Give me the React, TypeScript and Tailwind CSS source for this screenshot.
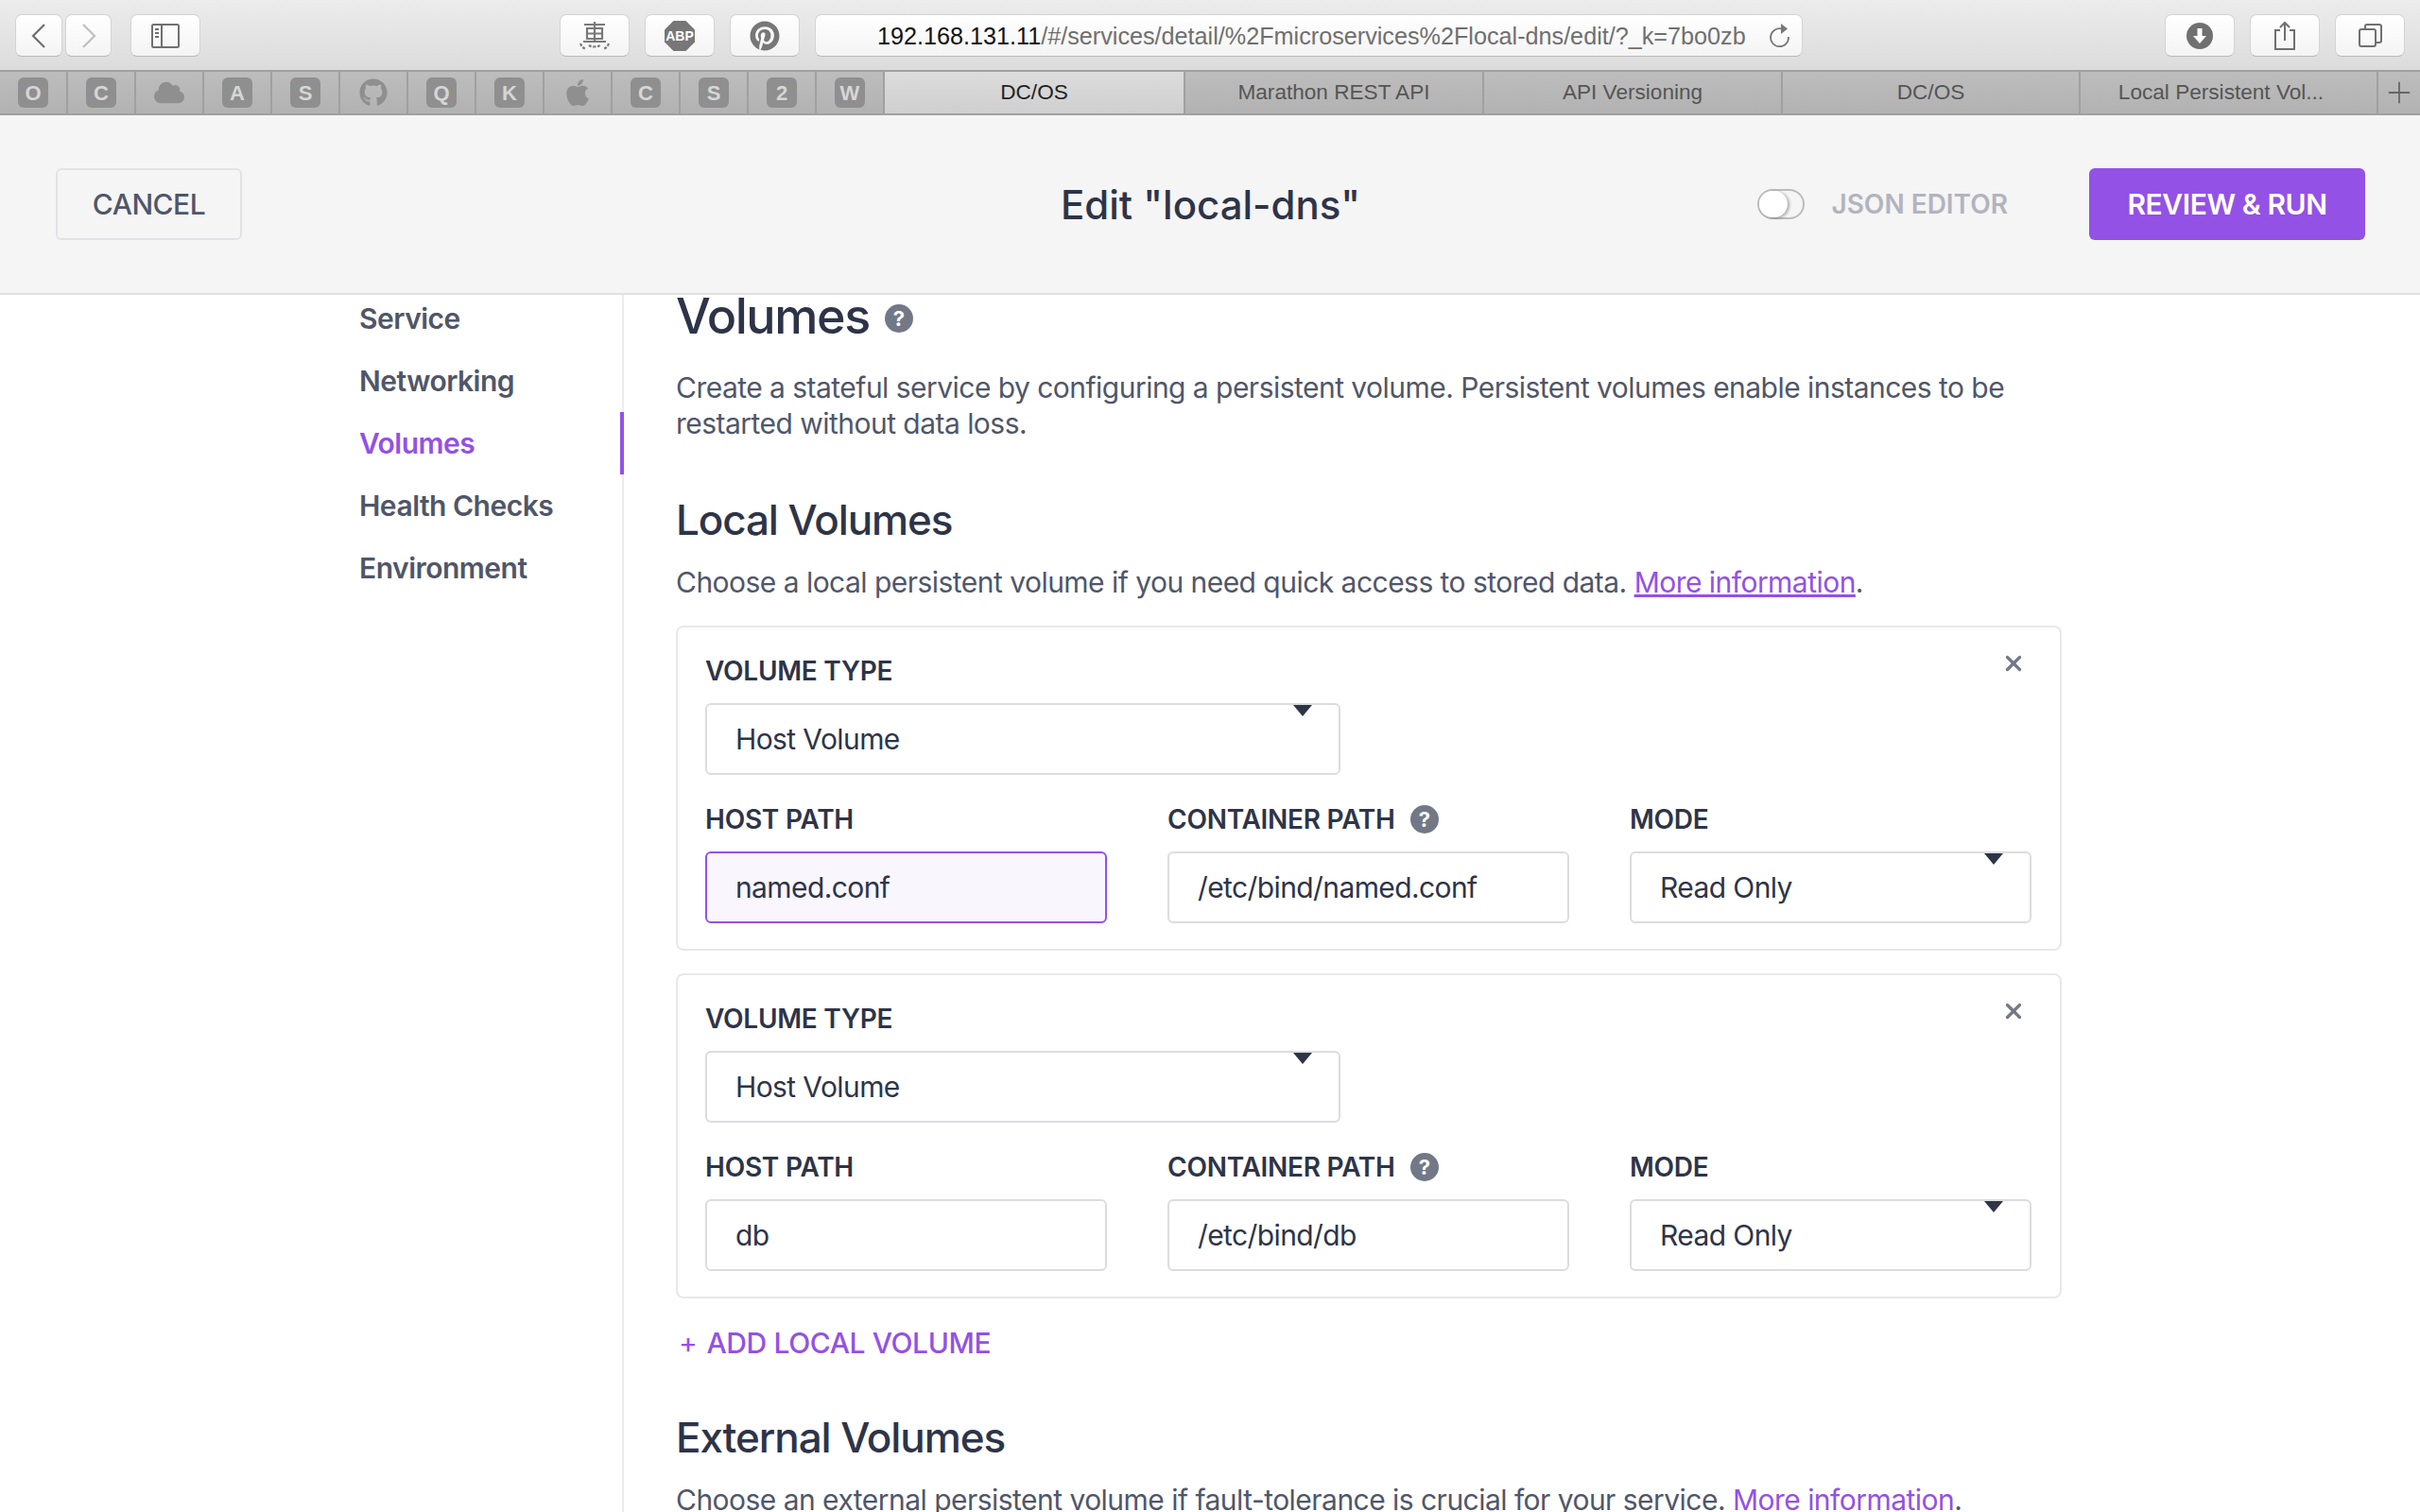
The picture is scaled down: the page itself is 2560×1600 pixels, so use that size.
import { ReactNode } from 'react';
import { Plus, X } from 'lucide-react';
import { FaGithub, FaApple, FaCloud, FaPinterest } from 'react-icons/fa';

const FONT = "font-['Inter','Liberation_Sans',sans-serif]";

function ToolButton({ className, children }: { className: string; children: ReactNode }) {
  return (
    <div className={`flex h-[45px] items-center justify-center rounded-[7px] border border-[#d4d4d4] border-b-[#b9b9b9] bg-gradient-to-b from-white to-[#f4f4f4] ${className}`}>
      {children}
    </div>
  );
}

function Favicon({ label }: { label: string }) {
  return (
    <div className="flex h-full w-[72px] shrink-0 items-center justify-center border-r-2 border-[#a0a0a0]">
      <div className="flex h-[32px] w-[32px] items-center justify-center rounded-[6px] bg-[#8f8f8f] font-['Liberation_Sans'] text-[22px] font-bold text-[#d6d6d6]">
        {label}
      </div>
    </div>
  );
}

function GlyphFavicon({ children }: { children: ReactNode }) {
  return (
    <div className="flex h-full w-[72px] shrink-0 items-center justify-center border-r-2 border-[#a0a0a0] text-[#8f8f8f]">
      {children}
    </div>
  );
}

function Tab({ title, active, className = '' }: { title: string; active?: boolean; className?: string }) {
  return (
    <div className={`flex h-full shrink-0 items-center justify-center border-r-2 border-[#a0a0a0] font-['Liberation_Sans'] text-[22.6px] ${active ? 'bg-gradient-to-b from-[#dcdcdc] to-[#cfcfcf] text-[#232323]' : 'text-[#555555]'} ${className}`}>
      {title}
    </div>
  );
}

function HelpIcon({ size }: { size: string }) {
  return (
    <span className={`inline-flex items-center justify-center rounded-full bg-[#737887] font-bold text-white ${size}`}>?</span>
  );
}

function Label({ children }: { children: ReactNode }) {
  return <div className="flex h-[38px] items-center gap-[16px] text-[28px] font-semibold tracking-[-0.25px] text-[#2e3448]">{children}</div>;
}

function Field({ value, className = '', caret, focused }: { value: string; className?: string; caret?: boolean; focused?: boolean }) {
  return (
    <div className={`relative flex h-[76px] items-center rounded-[6px] border-2 px-[30px] text-[30px] tracking-[-0.6px] text-[#2e3448] ${focused ? 'border-[#9351e5] bg-[#f9f6fe]' : 'border-[#dcdce0]'} ${className}`}>
      {value}
      {caret && <span className="absolute right-[28px] top-[0px] h-0 w-0 border-x-[10px] border-t-[12px] border-x-transparent border-t-[#2e3448]" />}
    </div>
  );
}

function VolumeCard({ hostPath, containerPath, focused }: { hostPath: string; containerPath: string; focused?: boolean }) {
  return (
    <div className="relative h-[344px] w-[1466px] rounded-[8px] border-2 border-[#e8e8ea] px-[29px] pt-[27px]">
      <X className="absolute right-[36px] top-[25px] text-[#737887]" size={26} strokeWidth={3} />
      <Label>VOLUME TYPE</Label>
      <Field value="Host Volume" caret className="mt-[15px] w-[672px]" />
      <div className="mt-[28px] grid grid-cols-[425px_425px_425px] gap-x-[64px]">
        <div>
          <Label>HOST PATH</Label>
          <Field value={hostPath} focused={focused} className="mt-[15px]" />
        </div>
        <div>
          <Label>
            CONTAINER PATH
            <HelpIcon size="h-[30px] w-[30px] text-[22px]" />
          </Label>
          <Field value={containerPath} className="mt-[15px]" />
        </div>
        <div>
          <Label>MODE</Label>
          <Field value="Read Only" caret className="mt-[15px]" />
        </div>
      </div>
    </div>
  );
}

const NAV = ['Service', 'Networking', 'Volumes', 'Health Checks', 'Environment'];

export default function App() {
  return (
    <div className={`flex h-[1600px] w-[2560px] flex-col overflow-hidden bg-white ${FONT}`}>
      {/* Safari toolbar */}
      <div className="flex h-[74px] shrink-0 items-start bg-gradient-to-b from-[#ececec] to-[#dcdcdc] pt-[15px]">
        <ToolButton className="ml-[16px] w-[50px]">
          <svg width="16" height="26" viewBox="0 0 16 26" fill="none" stroke="#6e6e6e" strokeWidth="2.2"><path d="M14 1 2 13l12 12" /></svg>
        </ToolButton>
        <ToolButton className="ml-[3px] w-[49px]">
          <svg width="16" height="26" viewBox="0 0 16 26" fill="none" stroke="#bfbfbf" strokeWidth="2.2"><path d="m2 1 12 12L2 25" /></svg>
        </ToolButton>
        <ToolButton className="ml-[20px] w-[74px]">
          <svg width="30" height="26" viewBox="0 0 30 26" fill="none" stroke="#707070" strokeWidth="2">
            <rect x="1" y="1" width="28" height="24" rx="1.5" />
            <path d="M11 1v24" />
            <path d="M4 6h4M4 10h4M4 14h4" />
          </svg>
        </ToolButton>
        <ToolButton className="ml-[380px] w-[74px]">
          <svg width="34" height="30" viewBox="0 0 34 30" fill="none" stroke="#7a7a7a" strokeWidth="2.2">
            <path d="M6 3h22M17 0v21M9 7h16v11H9zM9 12.5h16M5 21h24" />
            <path d="M2 23c1 3 3 5 6 6M32 23c-1 3-3 5-6 6M11 25c3 2 9 2 12 0" strokeDasharray="3 1.5" />
          </svg>
        </ToolButton>
        <ToolButton className="ml-[16px] w-[74px]">
          <svg width="32" height="32" viewBox="0 0 32 32">
            <polygon points="9.5,0 22.5,0 32,9.5 32,22.5 22.5,32 9.5,32 0,22.5 0,9.5" fill="#777777" />
            <text x="16" y="21" textAnchor="middle" fontFamily="Liberation Sans" fontWeight="700" fontSize="14" fill="#ffffff">ABP</text>
          </svg>
        </ToolButton>
        <ToolButton className="ml-[16px] w-[74px]"><FaPinterest size={32} className="text-[#777777]" /></ToolButton>
        <ToolButton className="relative ml-[16px] w-[1045px] pl-[65px] pt-[3px] !justify-start whitespace-nowrap font-['Liberation_Sans'] text-[25.2px]">
          <span className="text-[#111111]">192.168.131.11</span>
          <span className="text-[#6f6f6f]">/#/services/detail/%2Fmicroservices%2Flocal-dns/edit/?_k=7bo0zb</span>
          <svg width="24" height="26" viewBox="0 0 24 26" fill="none" className="absolute right-[11px] top-[9px]">
            <path d="M14 5.5A9.5 9.5 0 1 0 21 14" stroke="#777777" strokeWidth="1.8" />
            <path d="M13 0l7 5.5-7 5.5z" fill="#777777" />
          </svg>
        </ToolButton>
        <div className="flex-1" />
        <ToolButton className="w-[74px]">
          <svg width="28" height="28" viewBox="0 0 28 28">
            <circle cx="14" cy="14" r="14" fill="#707070" />
            <path d="M11.5 6h5v8h4.5L14 22l-7-8h4.5z" fill="#fff" />
          </svg>
        </ToolButton>
        <ToolButton className="ml-[16px] w-[74px]">
          <svg width="24" height="31" viewBox="0 0 24 31" fill="none" stroke="#707070" strokeWidth="2">
            <path d="M7 10H2v20h20V10h-5" />
            <path d="M12 21V2M7 7l5-5 5 5" />
          </svg>
        </ToolButton>
        <ToolButton className="ml-[16px] mr-[16px] w-[74px]">
          <svg width="25" height="25" viewBox="0 0 25 25" fill="none" stroke="#707070" strokeWidth="2">
            <rect x="1" y="6" width="17" height="18" rx="2" />
            <path d="M7 6V3a2 2 0 0 1 2-2h13a2 2 0 0 1 2 2v15a2 2 0 0 1-2 2h-4" />
          </svg>
        </ToolButton>
      </div>

      {/* Tab bar */}
      <div className="flex h-[48px] shrink-0 items-center border-y-2 border-[#a0a0a0] bg-gradient-to-b from-[#bdbdbd] to-[#b2b2b2]">
        <Favicon label="O" />
        <Favicon label="C" />
        <GlyphFavicon><FaCloud size={32} /></GlyphFavicon>
        <Favicon label="A" />
        <Favicon label="S" />
        <GlyphFavicon><FaGithub size={30} /></GlyphFavicon>
        <Favicon label="Q" />
        <Favicon label="K" />
        <GlyphFavicon><FaApple size={32} /></GlyphFavicon>
        <Favicon label="C" />
        <Favicon label="S" />
        <Favicon label="2" />
        <Favicon label="W" />
        <Tab title="DC/OS" active className="w-[318px]" />
        <Tab title="Marathon REST API" className="w-[316px]" />
        <Tab title="API Versioning" className="w-[316px]" />
        <Tab title="DC/OS" className="w-[315px]" />
        <Tab title="Local Persistent Vol..." className="w-[315px] pr-[16px]" />
        <div className="flex flex-1 items-center justify-center">
          <Plus size={36} strokeWidth={1.2} className="text-[#666666]" />
        </div>
      </div>

      {/* Modal header */}
      <div className="flex h-[190px] shrink-0 items-center border-b-2 border-[#e0e0e0] bg-[#f5f5f5] pl-[59px] pr-[58px]">
        <div className="flex flex-1 justify-start">
          <div className="flex h-[76px] w-[197px] items-center justify-center rounded-[6px] border-2 border-[#e2e2e6] text-[30px] font-medium tracking-[-0.5px] text-[#50566a]">
            CANCEL
          </div>
        </div>
        <div className="text-center text-[42px] font-medium text-[#2e3448]">Edit "local-dns"</div>
        <div className="flex flex-1 items-center justify-end text-[28px] font-semibold text-[#b2b4be]">
          <div className="mr-[28px] flex h-[32px] w-[50px] items-center rounded-full border-2 border-[#bcbcbc] bg-[#f5f5f5]">
            <span className="h-[28px] w-[30px] rounded-full bg-white shadow-[2px_1px_3px_rgba(0,0,0,0.3)]" />
          </div>
          JSON EDITOR
          <div className="ml-[86px] flex h-[76px] w-[292px] items-center justify-center rounded-[6px] bg-[#9351e5] text-[30px] font-semibold tracking-[-0.4px] text-white">
            REVIEW &amp; RUN
          </div>
        </div>
      </div>

      {/* Body */}
      <div className="flex min-h-0 flex-1 overflow-hidden">
        <nav className="w-[660px] shrink-0 border-r-2 border-[#ececee] pl-[380px]">
          <div className="-mt-[8px]">
            {NAV.map((item) => (
              <div
                key={item}
                className={`-mr-[2px] flex h-[66px] items-center border-r-4 text-[30px] font-semibold tracking-[-0.5px] ${item === 'Volumes' ? 'border-[#9351e5] text-[#9351e5]' : 'border-transparent text-[#505668]'}`}
              >
                {item}
              </div>
            ))}
          </div>
        </nav>

        <main className="min-w-0 flex-1 pl-[55px] text-[30px] tracking-[-0.53px] text-[#50566a]">
          <div className="mt-[2px] flex h-[42px] items-center gap-[16px] text-[52px] font-medium leading-[42px] tracking-[-1.4px] text-[#2e3448]">
            Volumes
            <HelpIcon size="mt-[4px] h-[30px] w-[30px] text-[22px] tracking-normal" />
          </div>
          <p className="mt-[35px] w-[1480px] leading-[38px]">
            Create a stateful service by configuring a persistent volume. Persistent volumes enable instances to be restarted without data loss.
          </p>
          <h2 className="mt-[55px] text-[44px] font-medium leading-[56px] tracking-[-1.1px] text-[#2e3448]">Local Volumes</h2>
          <p className="mt-[19px] leading-[38px]">
            Choose a local persistent volume if you need quick access to stored data.{' '}
            <span className="text-[#9351e5] underline">More information</span>.
          </p>
          <div className="mt-[27px] flex flex-col gap-[24px]">
            <VolumeCard hostPath="named.conf" containerPath="/etc/bind/named.conf" focused />
            <VolumeCard hostPath="db" containerPath="/etc/bind/db" />
          </div>
          <div className="mt-[28px] flex items-center pl-[3px] text-[30px] font-medium leading-[38px] tracking-[-0.4px] text-[#9351e5]">
            <span className="mr-[10px] font-normal">+</span>ADD LOCAL VOLUME
          </div>
          <h2 className="mt-[53px] text-[44px] font-medium leading-[56px] tracking-[-1.1px] text-[#2e3448]">External Volumes</h2>
          <p className="mt-[19px] leading-[38px]">
            Choose an external persistent volume if fault-tolerance is crucial for your service.{' '}
            <span className="text-[#9351e5] underline">More information</span>.
          </p>
        </main>
      </div>
    </div>
  );
}
